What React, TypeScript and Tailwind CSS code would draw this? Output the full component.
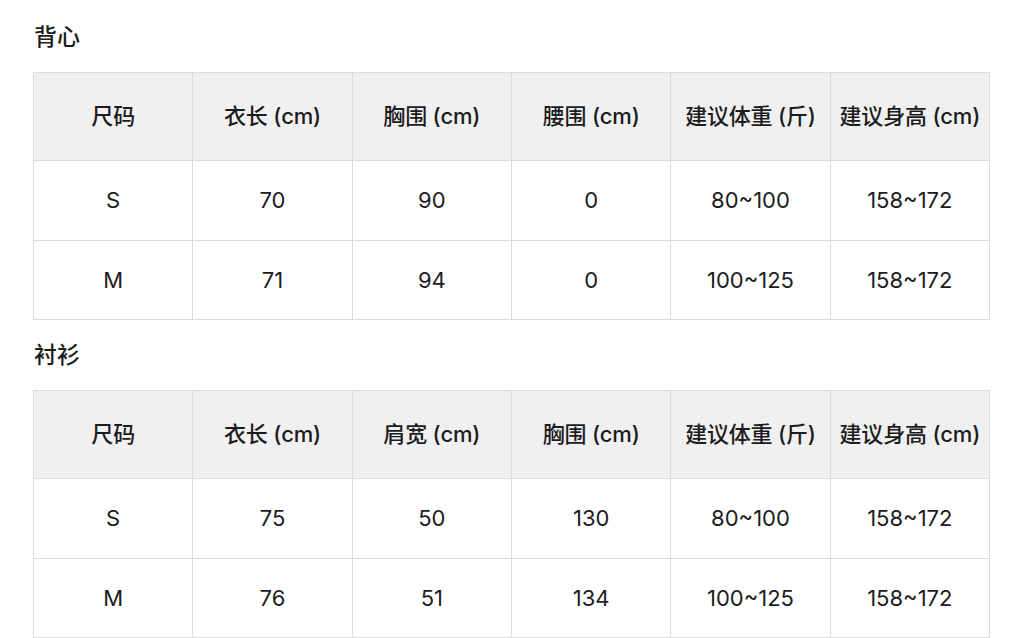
type SizeTable = {
  title: string;
  headers: string[];
  rows: string[][];
};

const tables: SizeTable[] = [
  {
    title: "背心",
    headers: ["尺码", "衣长 (cm)", "胸围 (cm)", "腰围 (cm)", "建议体重 (斤)", "建议身高 (cm)"],
    rows: [
      ["S", "70", "90", "0", "80~100", "158~172"],
      ["M", "71", "94", "0", "100~125", "158~172"],
    ],
  },
  {
    title: "衬衫",
    headers: ["尺码", "衣长 (cm)", "肩宽 (cm)", "胸围 (cm)", "建议体重 (斤)", "建议身高 (cm)"],
    rows: [
      ["S", "75", "50", "130", "80~100", "158~172"],
      ["M", "76", "51", "134", "100~125", "158~172"],
    ],
  },
];

const App = () => {
  return (
    <div
      className="bg-white text-[#1c1c1e] pl-[33px] pt-[20px]"
      style={{ fontFamily: 'Inter, "Noto Sans CJK SC", sans-serif' }}
    >
      {tables.map((table, i) => (
        <section key={table.title} className={i > 0 ? "mt-[18px]" : ""}>
          <h2 className="text-[23px] leading-[34px] font-medium pl-[1px] mb-[18px]">
            {table.title}
          </h2>
          <table className="w-[957px] table-fixed border-collapse text-[22px]">
            <thead>
              <tr className="bg-[#f0f0f0] h-[88px]">
                {table.headers.map((h) => (
                  <th
                    key={h}
                    className="border border-[#dcdcdc] font-medium text-center align-middle whitespace-nowrap tracking-[-0.2px]"
                  >
                    {h}
                  </th>
                ))}
              </tr>
            </thead>
            <tbody>
              {table.rows.map((row, r) => (
                <tr key={r} className={r === 0 ? "h-[80px]" : "h-[79px]"}>
                  {row.map((cell, c) => (
                    <td
                      key={c}
                      className="border border-[#dcdcdc] text-center align-middle font-normal"
                    >
                      {cell}
                    </td>
                  ))}
                </tr>
              ))}
            </tbody>
          </table>
        </section>
      ))}
    </div>
  );
};

export default App;
